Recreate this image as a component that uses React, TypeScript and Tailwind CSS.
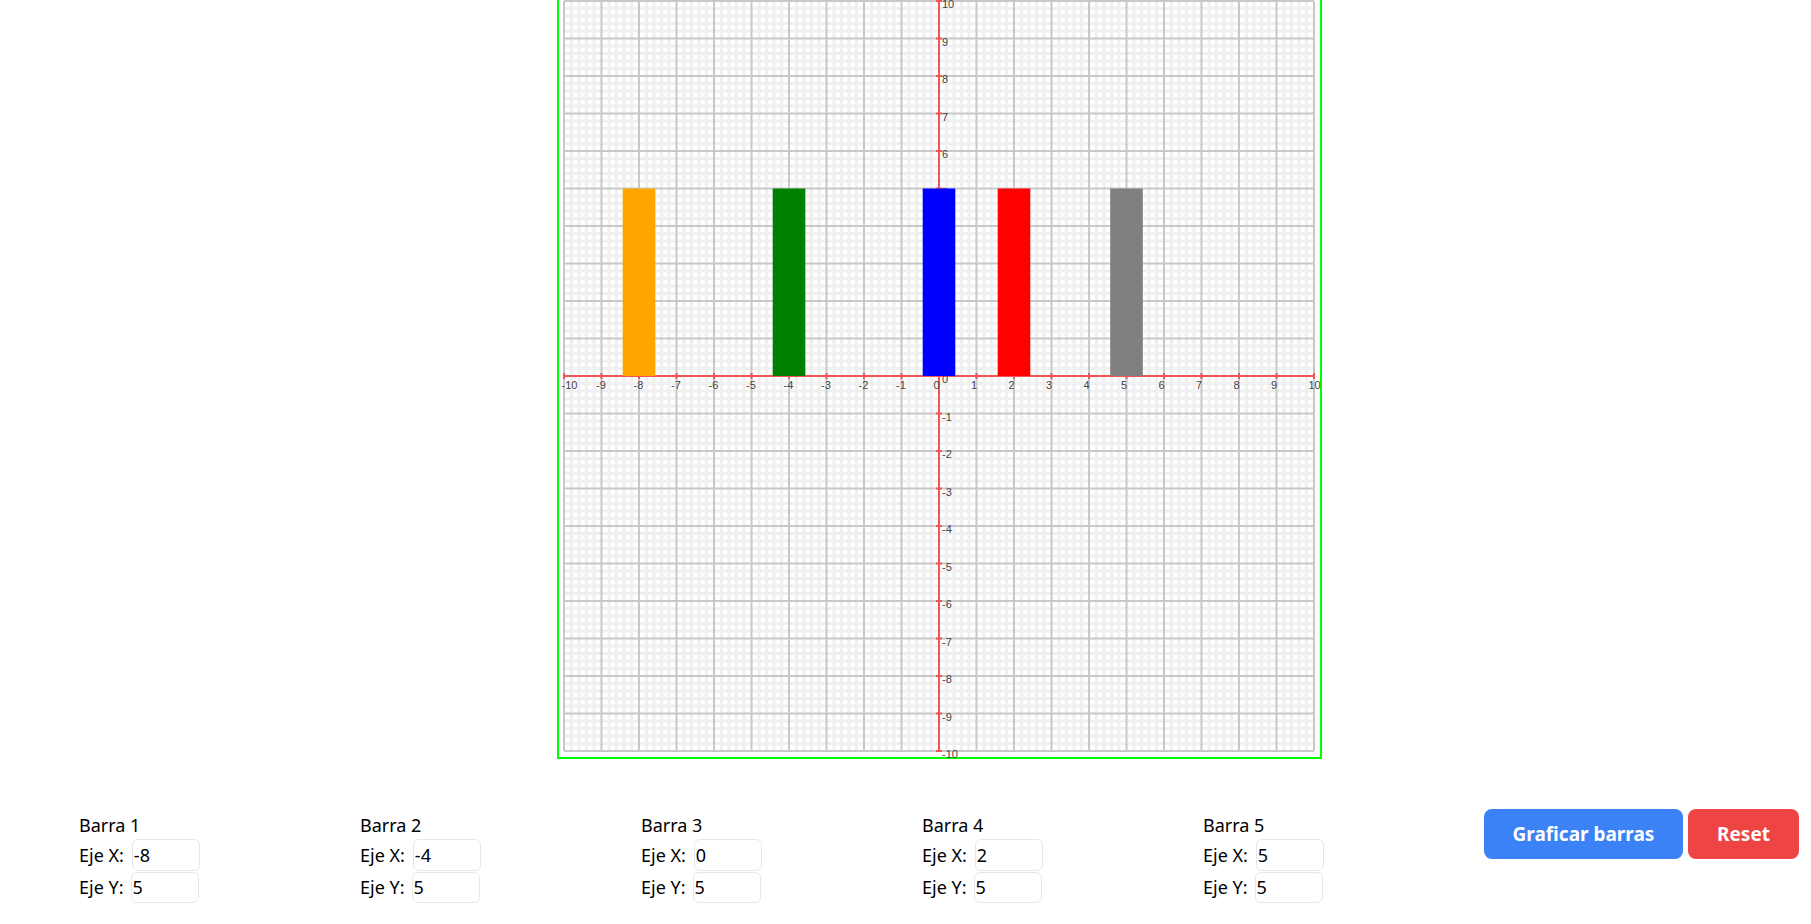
import { useState } from "react";

const COLORS = ["#ffa500", "#008000", "#0000ff", "#ff0000", "#808080"];
const INITIAL = [
  { x: "-8", y: "5" },
  { x: "-4", y: "5" },
  { x: "0", y: "5" },
  { x: "2", y: "5" },
  { x: "5", y: "5" },
];

const SIZE = 750;
const UNIT = 37.5;
const ORIGIN = 375;
const BAR_W = 32.6;

function Grid({ bars }: { bars: { x: number; y: number }[] }) {
  const minor = [];
  for (let i = 0; i <= 100; i++) {
    if (i % 5 === 0) continue;
    const p = i * 7.5;
    minor.push(<line key={"mv" + i} x1={p} y1={0} x2={p} y2={SIZE} stroke="#f0f0f0" strokeWidth={3} />);
    minor.push(<line key={"mh" + i} x1={0} y1={p} x2={SIZE} y2={p} stroke="#f0f0f0" strokeWidth={3} />);
  }

  const major = [];
  for (let i = 0; i <= 20; i++) {
    const p = i * UNIT;
    major.push(<line key={"v" + i} x1={p} y1={0} x2={p} y2={SIZE} stroke="#c8c8c8" strokeWidth={2} />);
    major.push(<line key={"h" + i} x1={0} y1={p} x2={SIZE} y2={p} stroke="#c8c8c8" strokeWidth={2} />);
  }

  const ticks = [];
  for (let v = -10; v <= 10; v++) {
    const px = ORIGIN + v * UNIT;
    const py = ORIGIN - v * UNIT;
    ticks.push(<line key={"tx" + v} x1={px} y1={ORIGIN - 3} x2={px} y2={ORIGIN + 3} stroke="#f25555" strokeWidth={2} />);
    ticks.push(<line key={"ty" + v} x1={ORIGIN - 3} y1={py} x2={ORIGIN + 3} y2={py} stroke="#f25555" strokeWidth={2} />);
    ticks.push(
      <text key={"lx" + v} x={Math.max(px - 5.5, -2.5)} y={ORIGIN + 13} fontSize={11} fill="#444" fontFamily="'Liberation Sans', Arial, sans-serif">
        {v}
      </text>
    );
    ticks.push(
      <text key={"ly" + v} x={ORIGIN + 3} y={py + 7} fontSize={11} fill="#444" fontFamily="'Liberation Sans', Arial, sans-serif">
        {v}
      </text>
    );
  }

  return (
    <svg width={SIZE} height={SIZE} viewBox={`0 0 ${SIZE} ${SIZE}`} className="block overflow-visible">
      <rect x={0} y={0} width={SIZE} height={SIZE} fill="#ffffff" />
      {minor}
      {major}
      <line x1={0} y1={ORIGIN} x2={SIZE} y2={ORIGIN} stroke="#f25555" strokeWidth={2} />
      <line x1={ORIGIN} y1={0} x2={ORIGIN} y2={SIZE} stroke="#f25555" strokeWidth={2} />
      {ticks}
      {bars.map((b, i) => {
        const cx = ORIGIN + b.x * UNIT;
        const h = b.y * UNIT;
        return (
          <rect
            key={i}
            x={cx - BAR_W / 2}
            y={h >= 0 ? ORIGIN - h : ORIGIN}
            width={BAR_W}
            height={Math.abs(h)}
            fill={COLORS[i]}
          />
        );
      })}
    </svg>
  );
}

export default function App() {
  const [fields, setFields] = useState(INITIAL);
  const [bars, setBars] = useState(INITIAL.map((f) => ({ x: Number(f.x), y: Number(f.y) })));

  const update = (i: number, key: "x" | "y", value: string) => {
    setFields((prev) => prev.map((f, j) => (j === i ? { ...f, [key]: value } : f)));
  };

  const graficar = () => {
    setBars(fields.map((f) => ({ x: Number(f.x) || 0, y: Number(f.y) || 0 })));
  };

  const reset = () => {
    setFields(INITIAL);
    setBars(INITIAL.map((f) => ({ x: Number(f.x), y: Number(f.y) })));
  };

  return (
    <div className="min-h-screen bg-white text-[18px] text-black overflow-hidden font-['Segoe_UI','Noto_Sans',sans-serif]">
      {/* Plano cartesiano */}
      <div className="ml-[557px] -mt-[6px] w-[765px] border-2 border-[#00ff00] pl-[5px] pr-[6px] pt-[5px] pb-[6px]">
        <Grid bars={bars} />
      </div>

      {/* Controles */}
      <div className="flex items-start pl-[79px] mt-[50px]">
        {fields.map((f, i) => (
          <div key={i} className="w-[281px] flex flex-col">
            <div className="h-[30px] leading-[32px]">Barra {i + 1}</div>
            <div className="flex items-center h-[32px]">
              <span>Eje X:</span>
              <input
                value={f.x}
                onChange={(e) => update(i, "x", e.target.value)}
                className="ml-[8px] w-[68px] h-[32px] border border-gray-200 rounded-md pl-[1px] outline-none text-[18px]"
              />
            </div>
            <div className="flex items-center h-[32px]">
              <span>Eje Y:</span>
              <input
                value={f.y}
                onChange={(e) => update(i, "y", e.target.value)}
                className="ml-[7px] w-[68px] h-[31px] border border-gray-200 rounded-md pl-[1px] outline-none text-[18px]"
              />
            </div>
          </div>
        ))}
        <div className="flex gap-[5px]">
          <button
            onClick={graficar}
            className="w-[199px] h-[50px] rounded-lg bg-[#3b82f6] text-white font-bold text-[19px]"
          >
            Graficar barras
          </button>
          <button
            onClick={reset}
            className="w-[111px] h-[50px] rounded-lg bg-[#ef4444] text-white font-bold text-[19px]"
          >
            Reset
          </button>
        </div>
      </div>
    </div>
  );
}
